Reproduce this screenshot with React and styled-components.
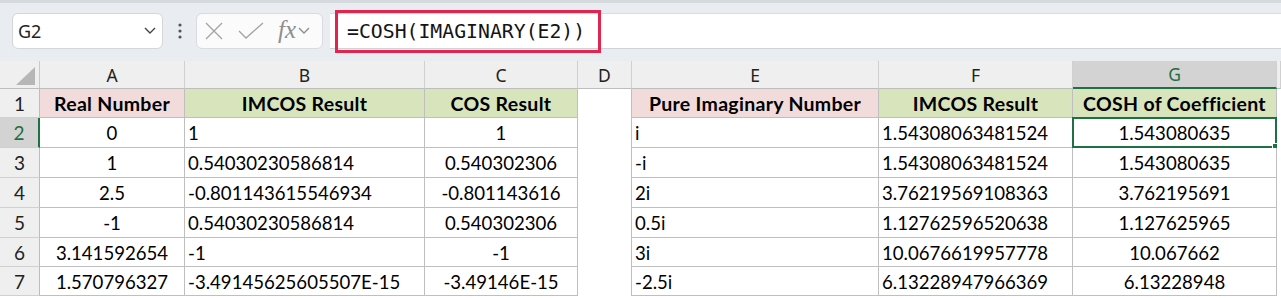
import styled, { createGlobalStyle } from "styled-components";

const GlobalStyle = createGlobalStyle`
  html, body {
    margin: 0;
    padding: 0;
    background: #ffffff;
  }
  body {
    font-family: Lato, "Liberation Sans", sans-serif;
  }
`;

const Wrap = styled.div`
  width: 1281px;
  height: 298px;
  overflow: hidden;
  background: #ffffff;
`;

const Toolbar = styled.div`
  height: 61px;
  box-sizing: border-box;
  background: #e9ecf0;
  border-top: 3px solid #d6d9dd;
  display: flex;
  align-items: flex-start;
  padding: 10px 0 0 12px;
`;

const NameBox = styled.div`
  width: 151px;
  height: 36px;
  box-sizing: border-box;
  background: #ffffff;
  border: 1px solid #d3d6da;
  border-radius: 6px;
  display: flex;
  align-items: center;
  justify-content: space-between;
  padding: 0 6px 0 5px;
  font-family: "Noto Sans", sans-serif;
  font-size: 18px;
  color: #1f1f1f;
`;

const Dots = styled.div`
  width: 33px;
  height: 36px;
  display: flex;
  align-items: center;
  justify-content: center;
`;

const FxBox = styled.div`
  width: 127px;
  height: 36px;
  box-sizing: border-box;
  background: #fbfbfb;
  border: 1px solid #d8dbdf;
  border-radius: 6px;
  display: flex;
  align-items: center;
  padding-left: 8px;
`;

const FxText = styled.span`
  font-family: "Liberation Serif", serif;
  font-style: italic;
  font-size: 25px;
  color: #8e8e8e;
  margin: 0 2px 3px 14px;
`;

const FormulaBar = styled.div`
  flex: 1;
  margin-left: 7px;
  height: 36px;
  box-sizing: border-box;
  background: #ffffff;
  border-top: 1px solid #d9dce0;
  border-bottom: 1px solid #cfd2d6;
  display: flex;
  align-items: center;
`;

const Highlight = styled.span`
  margin-left: 5px;
  width: 266px;
  height: 43px;
  box-sizing: border-box;
  border: 3px solid #e2254f;
  display: flex;
  align-items: center;
  padding-left: 9px;
  font-family: "DejaVu Sans Mono", "Liberation Mono", monospace;
  font-size: 19.8px;
  color: #141414;
`;

const Sheet = styled.div`
  display: grid;
  grid-template-columns: 40px 145px 240px 153px 54px 247px 194px 204px 4px;
  grid-template-rows: 28px 29px 30px 30px 30px 30px 29px 29px;
`;

const Corner = styled.div`
  background: #efefef;
  border-right: 1px solid #c9c9c9;
  border-bottom: 1px solid #bdbdbd;
  display: flex;
  align-items: flex-end;
  justify-content: flex-end;
  padding: 0 4px 3px 0;
`;

const ColHead = styled.div`
  box-sizing: border-box;
  background: ${(p) => (p.$active ? "#d3d3d3" : "#efefef")};
  color: ${(p) => (p.$active ? "#1e6e42" : "#222222")};
  border-right: 1px solid #d0d0d0;
  border-bottom: ${(p) => (p.$active ? "2px solid #1e7145" : "1px solid #bdbdbd")};
  display: flex;
  align-items: center;
  justify-content: center;
  font-family: "Noto Sans", sans-serif;
  font-size: 17.5px;
`;

const RowHead = styled.div`
  box-sizing: border-box;
  background: ${(p) => (p.$active ? "#d3d3d3" : "#efefef")};
  color: ${(p) => (p.$active ? "#1e6e42" : "#222222")};
  border-right: ${(p) => (p.$active ? "2px solid #1e7145" : "1px solid #bdbdbd")};
  border-bottom: 1px solid #d0d0d0;
  display: flex;
  align-items: center;
  justify-content: center;
  font-size: 19px;
`;

const fills = {
  pink: "#f2dcdb",
  green: "#d8e4bc",
};

const Cell = styled.div`
  position: relative;
  box-sizing: border-box;
  background: ${(p) => fills[p.$fill] || "#ffffff"};
  border-right: ${(p) => (p.$edge ? "none" : "1px solid #bfbfbf")};
  border-bottom: ${(p) => (p.$blank ? "none" : "1px solid #bfbfbf")};
  display: flex;
  align-items: center;
  justify-content: ${(p) => (p.$align === "left" ? "flex-start" : "center")};
  padding: ${(p) => (p.$align === "left" ? "1px 0 0 3px" : "1px 0 0 0")};
  font-size: ${(p) => (p.$bold ? "19.5px" : "18.6px")};
  letter-spacing: ${(p) => (p.$bold ? "0.3px" : "0")};
  font-weight: ${(p) => (p.$bold ? 700 : 400)};
  color: #000000;
  white-space: nowrap;

  ${(p) =>
    p.$selected &&
    `
    &::before {
      content: "";
      position: absolute;
      left: -1px;
      top: -1px;
      right: -1px;
      bottom: -1px;
      border: 2px solid #1e7145;
    }
    &::after {
      content: "";
      position: absolute;
      right: -4px;
      bottom: -4px;
      width: 6px;
      height: 6px;
      background: #1e7145;
      border: 1px solid #ffffff;
    }
  `}
`;

const columns = ["A", "B", "C", "D", "E", "F", "G"];
const aligns = ["center", "left", "center", "center", "left", "left", "center"];
const headFills = ["pink", "green", "green", null, "pink", "green", "green"];

const rows = [
  ["Real Number", "IMCOS Result", "COS Result", "", "Pure Imaginary Number", "IMCOS Result", "COSH of Coefficient"],
  ["0", "1", "1", "", "i", "1.54308063481524", "1.543080635"],
  ["1", "0.54030230586814", "0.540302306", "", "-i", "1.54308063481524", "1.543080635"],
  ["2.5", "-0.801143615546934", "-0.801143616", "", "2i", "3.76219569108363", "3.762195691"],
  ["-1", "0.54030230586814", "0.540302306", "", "0.5i", "1.12762596520638", "1.127625965"],
  ["3.141592654", "-1", "-1", "", "3i", "10.0676619957778", "10.067662"],
  ["1.570796327", "-3.49145625605507E-15", "-3.49146E-15", "", "-2.5i", "6.13228947966369", "6.13228948"],
];

const Chevron = ({ color = "#444", size = 12 }) => (
  <svg width={size} height={size * 0.6} viewBox="0 0 12 7">
    <path d="M1 1 L6 6 L11 1" fill="none" stroke={color} strokeWidth="1.4" />
  </svg>
);

export default function App() {
  return (
    <Wrap>
      <GlobalStyle />
      <Toolbar>
        <NameBox>
          <span>G2</span>
          <Chevron />
        </NameBox>
        <Dots>
          <svg width="4" height="18" viewBox="0 0 4 18">
            <circle cx="2" cy="3" r="1.6" fill="#555" />
            <circle cx="2" cy="9" r="1.6" fill="#555" />
            <circle cx="2" cy="15" r="1.6" fill="#555" />
          </svg>
        </Dots>
        <FxBox>
          <svg width="18" height="18" viewBox="0 0 18 18">
            <path d="M1 1 L17 17 M17 1 L1 17" stroke="#a3a3a3" strokeWidth="1.3" fill="none" />
          </svg>
          <svg width="26" height="18" viewBox="0 0 26 18" style={{ marginLeft: 15 }}>
            <path d="M1 9 L8 16 L25 1" stroke="#a3a3a3" strokeWidth="1.3" fill="none" />
          </svg>
          <FxText>fx</FxText>
          <Chevron color="#8e8e8e" size={12} />
        </FxBox>
        <FormulaBar>
          <Highlight>=COSH(IMAGINARY(E2))</Highlight>
        </FormulaBar>
      </Toolbar>

      <Sheet>
        <Corner>
          <svg width="19" height="18" viewBox="0 0 19 18">
            <path d="M0 18 L19 18 L19 0 Z" fill="#b6b6b6" />
          </svg>
        </Corner>
        {columns.map((c) => (
          <ColHead key={c} $active={c === "G"}>
            {c}
          </ColHead>
        ))}
        <ColHead />

        {rows.map((row, r) => (
          <div key={r} style={{ display: "contents" }}>
            <RowHead $active={r === 1}>{r + 1}</RowHead>
            {row.map((val, c) => (
              <Cell
                key={c}
                $align={r === 0 ? "center" : aligns[c]}
                $fill={r === 0 ? headFills[c] : null}
                $bold={r === 0}
                $blank={c === 3}
                $selected={r === 1 && c === 6}
              >
                {val}
              </Cell>
            ))}
            <Cell $blank $edge />
          </div>
        ))}
      </Sheet>
    </Wrap>
  );
}
